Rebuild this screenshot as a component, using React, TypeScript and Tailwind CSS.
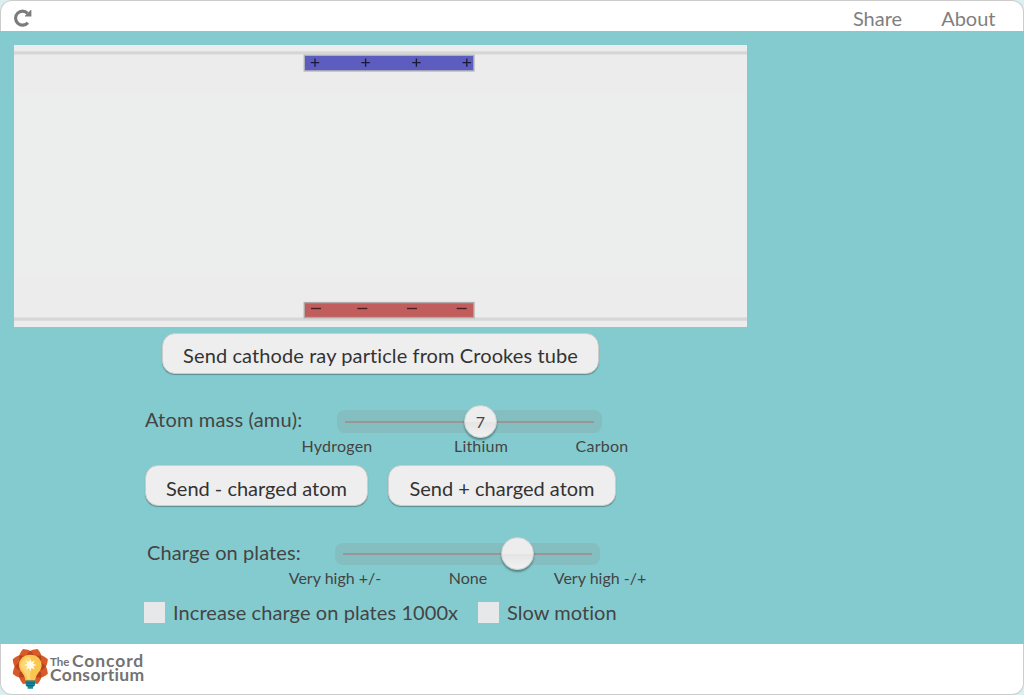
import React from "react";

function ReloadIcon() {
  return (
    <svg className="ml-[13px] mt-[8px] block h-[19px] w-[19px]" viewBox="0 0 19 19" fill="none">
      <path d="M13.9 13.7A7 7 0 1 1 13.6 4.3" stroke="#7b7b7b" strokeWidth="3.1" />
      <path d="M17.4 1V7.4H11V6.8L16.7 1Z" fill="#7b7b7b" />
    </svg>
  );
}

function Chamber() {
  const plus = [11, 61.6, 112.4, 162.8];
  const minus = [12, 58.3, 108, 157.7];
  return (
    <svg className="block h-[282px] w-[733px]" viewBox="0 0 733 282">
      <rect width="733" height="282" fill="#ececec" />
      <rect y="49" width="733" height="182" fill="#eceeed" />
      <rect y="6" width="733" height="4" fill="#e0e1e0" />
      <rect y="6.6" width="733" height="2.4" fill="#d5d7d6" />
      <rect y="272" width="733" height="4" fill="#e0e1e0" />
      <rect y="273" width="733" height="2.4" fill="#d5d7d6" />
      <rect x="290.3" y="10.3" width="169.6" height="15.6" fill="#5d5dc0" stroke="#b0b0b8" strokeWidth="1.4" />
      <rect x="290.3" y="257.6" width="169.6" height="15" fill="#c25d5d" stroke="#b0a9a9" strokeWidth="1.4" />
      {plus.map((x) => (
        <path key={x} d={`M${290 + x - 4.2} 17.7h8.4M${290 + x} 13.4v8.4`} stroke="#1a1a38" strokeWidth="1.3" />
      ))}
      {minus.map((x) => (
        <path key={x} d={`M${290 + x - 5} 263.5h10`} stroke="#4a2020" strokeWidth="1.4" />
      ))}
    </svg>
  );
}

function PillButton({ className, children }: { className: string; children: React.ReactNode }) {
  return (
    <button
      className={`box-border block h-[41px] shrink-0 whitespace-nowrap rounded-[13px] border border-[#cccccc] bg-[#eeeeee] text-center text-[20px] leading-[34px] text-[#333333] shadow-[0_1px_1px_rgba(0,0,0,0.3)] ${className}`}
    >
      {children}
    </button>
  );
}

function Slider({ knob, value, className }: { knob: string; value?: string; className: string }) {
  return (
    <div className={`relative flex items-center rounded-[8px] bg-[#84bec1] px-[8px] ${className}`}>
      <div className="h-[2px] w-full bg-[#9b9597]" />
      <div
        className={`absolute flex h-[33px] w-[33px] items-center justify-center rounded-full border border-[#d2d2d2] bg-linear-to-b from-[#ededed] from-50% via-[#e4e4e4] via-51% to-[#f2f2f2] text-[16px] leading-none text-[#444444] shadow-[0_2px_2px_rgba(0,0,0,0.35)] ${knob}`}
      >
        {value}
      </div>
    </div>
  );
}

function Logo() {
  return (
    <div className="flex items-start pl-[9px] pt-[3px]">
      <svg className="block h-[44px] w-[40px]" viewBox="0 0 40 44">
        <g fill="#d75a29">
          {[0, 45, 90, 135, 180, 225, 270, 315].map((a) => (
            <path key={a} transform={`rotate(${a + 22.5} 20.3 19.5)`} d="M20.3 19.5L13.4 9C12.8 5 16.5 2.6 20.3 .5C24.1 2.6 27.8 5 27.2 9Z" />
          ))}
        </g>
        <g fill="#b84322">
          {[-135, -90, -45, 0, 45, 90, 135].map((a) => (
            <path key={a} transform={`rotate(${a} 20.3 19.5)`} d="M20.3 19.5L16.6 8L20.3 3.8L24 8Z" />
          ))}
        </g>
        <path d="M20.3 7.8C13.3 7.8 9 12.6 9 18.2C9 24.3 15 26.3 15.4 33.6H25.2C25.6 26.3 31.6 24.3 31.6 18.2C31.6 12.6 27.3 7.8 20.3 7.8Z" fill="#fbc64f" />
        <path d="M20.3 9.8C14.7 9.8 11 14 11 18.3C11 23.6 16.5 25.5 17.5 32.5H20.3Z" fill="#fdd676" />
        <path d="M20.3 11.7L21.5 15.1L24.8 13.5L23.2 16.7L26.6 18L23.2 19.3L24.8 22.5L21.5 20.9L20.3 24.3L19.1 20.9L15.8 22.5L17.4 19.3L14 18L17.4 16.7L15.8 13.5L19.1 15.1Z" fill="#fffbe6" />
        <path d="M15.6 33.4H25V38L24 39.4H23V41.8H17.6V39.4H16.6L15.6 38Z" fill="#16889a" />
        <path d="M15.6 36H25M16.4 38.6H24.2" stroke="#0f5867" strokeWidth=".8" />
      </svg>
      <div className="mt-[7px] whitespace-nowrap font-[Lato,sans-serif] font-bold text-[#737373]">
        <div className="flex h-[14px] items-start">
          <span className="w-[22px] text-[11.5px] leading-[15px]">The</span>
          <span className="text-[17.5px] leading-[14px] tracking-[0.9px]">Concord</span>
        </div>
        <div className="text-[17.5px] leading-[14px] tracking-[0.35px]">Consortium</div>
      </div>
    </div>
  );
}

function CheckBox({ label, className }: { label: string; className: string }) {
  return (
    <label className={`flex shrink-0 items-center gap-[8px] whitespace-nowrap text-[20px] leading-[24px] ${className}`}>
      <span className="block h-[21px] w-[21px] bg-[#e6e8ea]" />
      {label}
    </label>
  );
}

export default function App() {
  return (
    <div className="h-[695px] w-[1024px] overflow-hidden bg-[#dbeff0] font-[Lato,sans-serif] text-[#444444]">
      <header className="flex h-[31px] justify-between rounded-t-[12px] border border-b-0 border-[#cccccc] bg-white">
        <ReloadIcon />
        <nav className="flex gap-[39px] pr-[27.5px] pt-[5px] text-[20px] leading-[24px] text-[#7f7f7f]">
          <a>Share</a>
          <a>About</a>
        </nav>
      </header>
      <main className="h-[613px] bg-[#84cbcf] pl-[14px] pt-[14px]">
        <Chamber />
        <div className="pl-[148px] pt-[6px]">
          <PillButton className="w-[437px] pt-[3px] tracking-[0.1px]">Send cathode ray particle from Crookes tube</PillButton>
        </div>
        <div className="flex pl-[131px] pt-[33px]">
          <span className="h-[25px] w-[192px] text-[20px] leading-[24px] tracking-[0.18px]">Atom mass (amu):</span>
          <Slider className="mt-[3px] h-[23px] w-[265px]" knob="left-[127px] top-[-5px]" value="7" />
        </div>
        <div className="flex h-[32px] pl-[273px] pt-[3px] text-center text-[16px] leading-[20px]">
          <span className="w-[100px] tracking-[0.25px]">Hydrogen</span>
          <span className="ml-[44px] w-[100px] tracking-[0.2px]">Lithium</span>
          <span className="ml-[21px] w-[100px] tracking-[0.25px]">Carbon</span>
        </div>
        <div className="flex gap-[20px] pl-[131px]">
          <PillButton className="w-[223px] pt-[4px]">Send - charged atom</PillButton>
          <PillButton className="w-[228px] pt-[4px]">Send + charged atom</PillButton>
        </div>
        <div className="flex pl-[133px] pt-[34px]">
          <span className="h-[25px] w-[188px] text-[20px] leading-[24px] tracking-[0.1px]">Charge on plates:</span>
          <Slider className="mt-[3px] h-[22px] w-[265px]" knob="left-[166px] top-[-6px]" />
        </div>
        <div className="flex h-[35px] pl-[271px] pt-[3px] text-center text-[16px] leading-[20px]">
          <span className="w-[100px]">Very high +/-</span>
          <span className="ml-[33px] w-[100px]">None</span>
          <span className="ml-[32px] w-[100px]">Very high -/+</span>
        </div>
        <div className="flex pl-[130px]">
          <CheckBox className="w-[334px] tracking-[0.08px]" label="Increase charge on plates 1000x" />
          <CheckBox className="w-[150px] tracking-[0.05px]" label="Slow motion" />
        </div>
      </main>
      <footer className="h-[51px] rounded-b-[12px] border border-t-0 border-[#cccccc] bg-white">
        <Logo />
      </footer>
    </div>
  );
}
